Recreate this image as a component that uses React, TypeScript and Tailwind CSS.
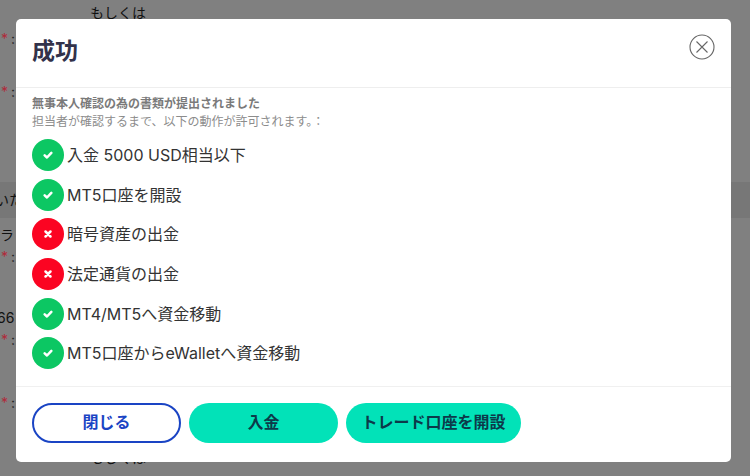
import React from 'react';

const FONT = "font-['Inter','Noto_Sans_CJK_JP',sans-serif]";

const items = [
  { ok: true, label: '入金 5000 USD相当以下' },
  { ok: true, label: 'MT5口座を開設' },
  { ok: false, label: '暗号資産の出金' },
  { ok: false, label: '法定通貨の出金' },
  { ok: true, label: 'MT4/MT5へ資金移動' },
  { ok: true, label: 'MT5口座からeWalletへ資金移動' },
];

const StatusIcon = ({ ok }: { ok: boolean }) => (
  <span
    className={`flex h-8 w-8 shrink-0 items-center justify-center rounded-full ${ok ? 'bg-[#0cc763]' : 'bg-[#fb0422]'}`}
  >
    <svg width="10" height="10" viewBox="0 0 12 12" fill="none" stroke="white" strokeWidth="3" strokeLinecap="round" strokeLinejoin="round">
      {ok ? <path d="M2 6.4 L4.8 9 L10 3.4" /> : <path d="M3 3 L9 9 M9 3 L3 9" />}
    </svg>
  </span>
);

const RequiredMark = () => (
  <div className="flex h-5 gap-[3px] pl-[1px] text-[#b02a3a]">
    <span>*</span>
    <span className="text-[#222]">:</span>
  </div>
);

const BackgroundPage = () => (
  <div className="flex h-full flex-col text-[14px] leading-5 text-[#111]">
    <div className="mt-[3px] pl-[90px]">もしくは</div>
    <div className="mt-[6px]"><RequiredMark /></div>
    <div className="mt-[33px]"><RequiredMark /></div>
    <div className="mt-[80px] flex h-9 items-center bg-[#777777] pl-0"><span className="-ml-[5px]">いた</span></div>
    <div className="mt-[7px] h-5">ラ</div>
    <div className="mt-[2px]"><RequiredMark /></div>
    <div className="mt-[41px] h-5 -ml-[3px]">66</div>
    <div className="mt-[2px]"><RequiredMark /></div>
    <div className="mt-[43px]"><RequiredMark /></div>
    <div className="mt-[35px] pl-[90px]">もしくは</div>
  </div>
);

export default function App() {
  return (
    <div className={`relative h-[476px] w-[750px] overflow-hidden bg-[#808080] ${FONT}`}>
      <BackgroundPage />
      <div className="absolute left-4 top-[19px] flex h-[443px] w-[715px] flex-col rounded-[5px] bg-white">
        <header className="flex h-[69px] shrink-0 items-start justify-between border-b border-[#eeeeee] pl-4 pr-4">
          <h1 className="mt-[14px] text-[23px] font-bold leading-9 text-[#32324a]">成功</h1>
          <button className="mt-[15px] text-[#666]" aria-label="閉じる">
            <svg width="26" height="26" viewBox="0 0 26 26" fill="none" stroke="currentColor" strokeWidth="1.1">
              <circle cx="13" cy="13" r="12" />
              <path d="M7.5 7.5 L18.5 18.5 M18.5 7.5 L7.5 18.5" />
            </svg>
          </button>
        </header>

        <div className="flex flex-1 flex-col px-4 pt-[7px]">
          <p className="text-[12px] font-bold leading-[18px] text-[#7a7a7a]">無事本人確認の為の書類が提出されました</p>
          <p className="text-[12px] leading-[18px] text-[#8c8c8c]">担当者が確認するまで、以下の動作が許可されます。：</p>
          <ul className="mt-[8px] flex flex-col gap-[7.7px]">
            {items.map((item) => (
              <li key={item.label} className="flex items-center gap-[3px] text-[16px] leading-8 text-[#333]">
                <StatusIcon ok={item.ok} />
                <span>{item.label}</span>
              </li>
            ))}
          </ul>
        </div>

        <footer className="flex h-[76px] shrink-0 items-start gap-2 border-t border-[#f0f0f0] pl-4 pt-4">
          <button className="h-10 w-[149px] rounded-full border-2 border-[#1a44c4] pb-[2px] text-[16px] font-bold text-[#1a44c4]">閉じる</button>
          <button className="h-10 w-[149px] rounded-full bg-[#02e2b8] pb-[2px] text-[16px] font-bold text-[#0c3a4a]">入金</button>
          <button className="h-10 w-[175px] rounded-full bg-[#02e2b8] pb-[2px] text-[16px] font-bold text-[#0c3a4a]">トレード口座を開設</button>
        </footer>
      </div>
    </div>
  );
}
